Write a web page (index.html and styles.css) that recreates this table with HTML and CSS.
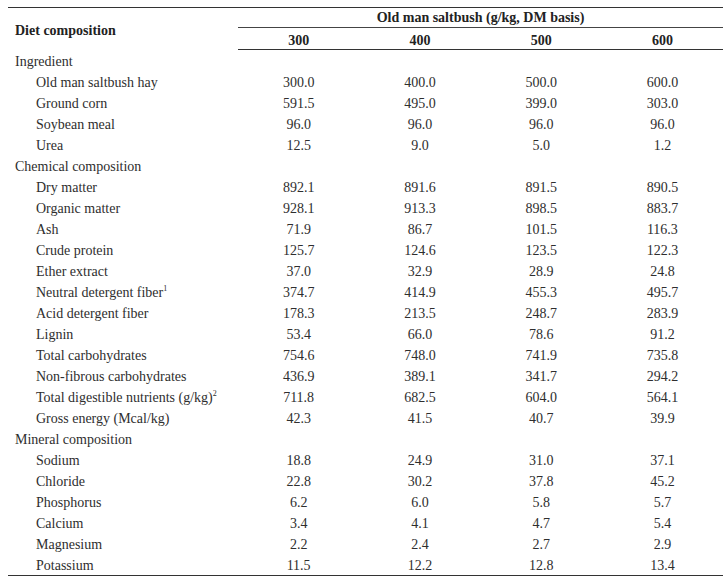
FILE: index.html
```html
<!DOCTYPE html>
<html>
<head>
<meta charset="utf-8">
<link rel="stylesheet" href="styles.css">
</head>
<body>
<table class="diet">
  <colgroup>
    <col class="c-label">
    <col class="c-val"><col class="c-val"><col class="c-val"><col class="c-val">
  </colgroup>
  <thead>
    <tr class="h1">
      <th rowspan="2" class="h-label">Diet composition</th>
      <th colspan="4" class="h-group">Old man saltbush (g/kg, DM basis)</th>
    </tr>
    <tr class="h2">
      <th>300</th><th>400</th><th>500</th><th>600</th>
    </tr>
  </thead>
  <tbody>
    <tr class="sec"><td>Ingredient</td><td></td><td></td><td></td><td></td></tr>
    <tr><td>Old man saltbush hay</td><td>300.0</td><td>400.0</td><td>500.0</td><td>600.0</td></tr>
    <tr><td>Ground corn</td><td>591.5</td><td>495.0</td><td>399.0</td><td>303.0</td></tr>
    <tr><td>Soybean meal</td><td>96.0</td><td>96.0</td><td>96.0</td><td>96.0</td></tr>
    <tr><td>Urea</td><td>12.5</td><td>9.0</td><td>5.0</td><td>1.2</td></tr>
    <tr class="sec"><td>Chemical composition</td><td></td><td></td><td></td><td></td></tr>
    <tr><td>Dry matter</td><td>892.1</td><td>891.6</td><td>891.5</td><td>890.5</td></tr>
    <tr><td>Organic matter</td><td>928.1</td><td>913.3</td><td>898.5</td><td>883.7</td></tr>
    <tr><td>Ash</td><td>71.9</td><td>86.7</td><td>101.5</td><td>116.3</td></tr>
    <tr><td>Crude protein</td><td>125.7</td><td>124.6</td><td>123.5</td><td>122.3</td></tr>
    <tr><td>Ether extract</td><td>37.0</td><td>32.9</td><td>28.9</td><td>24.8</td></tr>
    <tr><td>Neutral detergent fiber<sup>1</sup></td><td>374.7</td><td>414.9</td><td>455.3</td><td>495.7</td></tr>
    <tr><td>Acid detergent fiber</td><td>178.3</td><td>213.5</td><td>248.7</td><td>283.9</td></tr>
    <tr><td>Lignin</td><td>53.4</td><td>66.0</td><td>78.6</td><td>91.2</td></tr>
    <tr><td>Total carbohydrates</td><td>754.6</td><td>748.0</td><td>741.9</td><td>735.8</td></tr>
    <tr><td>Non-fibrous carbohydrates</td><td>436.9</td><td>389.1</td><td>341.7</td><td>294.2</td></tr>
    <tr><td>Total digestible nutrients (g/kg)<sup>2</sup></td><td>711.8</td><td>682.5</td><td>604.0</td><td>564.1</td></tr>
    <tr><td>Gross energy (Mcal/kg)</td><td>42.3</td><td>41.5</td><td>40.7</td><td>39.9</td></tr>
    <tr class="sec"><td>Mineral composition</td><td></td><td></td><td></td><td></td></tr>
    <tr><td>Sodium</td><td>18.8</td><td>24.9</td><td>31.0</td><td>37.1</td></tr>
    <tr><td>Chloride</td><td>22.8</td><td>30.2</td><td>37.8</td><td>45.2</td></tr>
    <tr><td>Phosphorus</td><td>6.2</td><td>6.0</td><td>5.8</td><td>5.7</td></tr>
    <tr><td>Calcium</td><td>3.4</td><td>4.1</td><td>4.7</td><td>5.4</td></tr>
    <tr><td>Magnesium</td><td>2.2</td><td>2.4</td><td>2.7</td><td>2.9</td></tr>
    <tr class="last"><td>Potassium</td><td>11.5</td><td>12.2</td><td>12.8</td><td>13.4</td></tr>
  </tbody>
</table>
</body>
</html>
```

FILE: styles.css
```css
html, body {
  margin: 0;
  padding: 0;
  background: #fff;
}

body {
  padding: 7px 0 0 8px;
  font-family: "Liberation Serif", "Times New Roman", serif;
  font-size: 14px;
  color: #2e2e2e;
}

.diet {
  width: 715px;
  border-collapse: collapse;
  table-layout: fixed;
  border-top: 1.5px solid #333;
  border-bottom: 1.5px solid #333;
}

.c-label { width: 230px; }
.c-val { width: 121.25px; }

.diet th {
  font-weight: bold;
  color: #222;
  padding: 0;
  text-align: center;
  line-height: 16px;
}

.diet .h1 { height: 20px; }
.diet .h2 { height: 20px; }

.diet .h-label {
  text-align: left;
  padding-left: 7px;
  padding-top: 4px;
  vertical-align: middle;
}

.diet .h-group {
  border-bottom: 1px solid #444;
  vertical-align: middle;
  padding-top: 1px;
}

.diet .h2 th {
  border-bottom: 1.5px solid #333;
  vertical-align: middle;
  padding-top: 5px;
}

.diet td {
  height: 21px;
  box-sizing: border-box;
  padding: 2px 0 0 0;
  text-align: center;
  vertical-align: middle;
  line-height: 19px;
}

.diet td:first-child {
  text-align: left;
  padding-left: 28px;
  white-space: nowrap;
}

.diet .sec td:first-child {
  padding-left: 7px;
}

.diet sup {
  font-size: 8px;
  line-height: 0;
  vertical-align: 6px;
}
```
